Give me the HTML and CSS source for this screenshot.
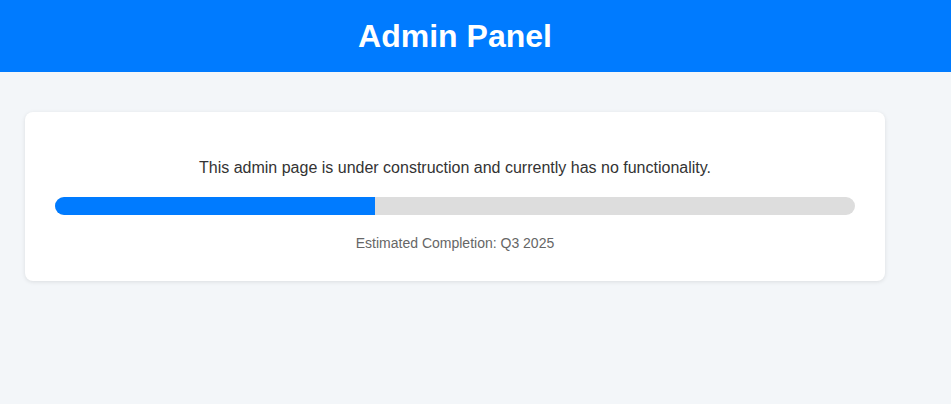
FILE: index.html
```html
<!DOCTYPE html>
<html lang="en">
<head>
<meta charset="utf-8">
<title>Admin Panel</title>
<link rel="stylesheet" href="styles.css">
</head>
<body>
<header class="header">
  <div class="header-inner">
    <h1 class="title">Admin Panel</h1>
  </div>
</header>
<main class="main">
  <section class="card">
    <p class="message">This admin page is under construction and currently has no functionality.</p>
    <div class="progress"><div class="progress-fill" style="width: 40%"></div></div>
    <p class="eta">Estimated Completion: Q3 2025</p>
  </section>
</main>
</body>
</html>
```

FILE: styles.css
```css
* { box-sizing: border-box; }
html, body {
  margin: 0;
  padding: 0;
}
body {
  background: #f3f6f9;
  font-family: "Liberation Sans", Arial, sans-serif;
  color: #333;
  min-height: 404px;
}
.header {
  background: #007bff;
  height: 72px;
}
.header-inner {
  max-width: 910px;
  height: 72px;
  display: flex;
  align-items: center;
  justify-content: center;
}
.title {
  margin: 0;
  color: #fff;
  font-size: 32px;
  font-weight: bold;
}
.main {
  padding: 40px 25px;
}
.card {
  width: 860px;
  background: #fff;
  border-radius: 8px;
  box-shadow: 0 1px 4px rgba(0, 0, 0, 0.1);
  padding: 30px;
  text-align: center;
}
.message {
  margin: 17px 0 0;
  font-size: 16px;
  color: #333;
}
.progress {
  margin: 20px 0;
  height: 18px;
  background: #ddd;
  border-radius: 9px;
  overflow: hidden;
}
.progress-fill {
  height: 100%;
  background: #007bff;
}
.eta {
  margin: 0;
  font-size: 14px;
  color: #666;
}
```
